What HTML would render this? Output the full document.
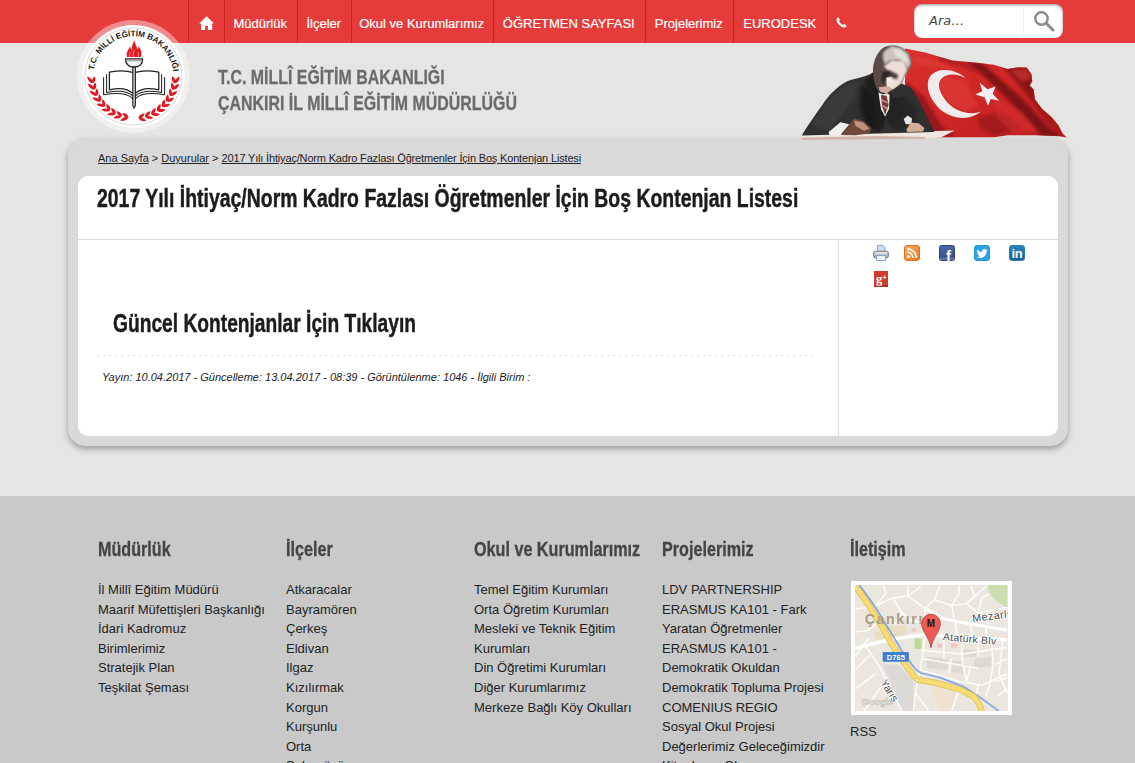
<!DOCTYPE html>
<html lang="tr">
<head>
<meta charset="utf-8">
<title>2017 Yılı İhtiyaç/Norm Kadro Fazlası Öğretmenler İçin Boş Kontenjan Listesi</title>
<style>
html,body{margin:0;padding:0;}
body{width:1135px;height:763px;overflow:hidden;background:#e5e5e4;font-family:"Liberation Sans",Arial,sans-serif;position:relative;color:#222;}
a{color:inherit;text-decoration:none;}
.cond{display:inline-block;transform-origin:0 50%;white-space:nowrap;font-weight:bold;}
#topbar{position:absolute;left:0;top:0;width:1135px;height:43px;background:#e53b3a;}
#nav{position:absolute;left:188px;top:0;height:43px;}
#nav a{position:absolute;top:0;height:43px;line-height:47px;color:#fff;font-size:13px;-webkit-text-stroke:.2px #fff;white-space:nowrap;border-left:1px solid #c42424;box-sizing:border-box;text-align:center;padding-right:1.5px;}
#search{position:absolute;left:914px;top:4px;width:149px;height:34px;background:#fff;border-radius:8px;box-shadow:inset 0 1px 3px rgba(0,0,0,.45);}
#search span{position:absolute;left:15px;top:8.5px;font-family:"DejaVu Sans","Liberation Sans",sans-serif;font-style:italic;font-size:13px;color:#444;}
#search i{position:absolute;left:109px;top:5px;height:25px;border-left:1px dotted #ddd;}
#sitename{position:absolute;left:218px;top:63.5px;color:#6b6b6b;-webkit-text-stroke:.3px #6b6b6b;font-size:20px;line-height:26px;}
#wrap{position:absolute;left:68px;top:138px;width:1000px;height:308px;background:#d9d9d9;border-radius:18px;box-shadow:0 3px 6px rgba(0,0,0,.33);}
#crumb{position:absolute;left:30px;top:14px;font-size:11px;color:#222;white-space:nowrap;}
#crumb a{text-decoration:underline;}
#card{position:absolute;left:10px;top:38px;width:980px;height:260px;background:#fff;border-radius:10px;}
#title{position:absolute;left:19px;top:6px;font-size:25px;color:#1c1c1c;-webkit-text-stroke:.45px #1c1c1c;line-height:32px;}
#hline{position:absolute;left:0;top:63px;width:980px;border-top:1px solid #dcdcdc;}
#vline{position:absolute;left:760px;top:64px;height:196px;border-left:1px solid #dcdcdc;}
#sub{position:absolute;left:35px;top:131px;font-size:25px;color:#1c1c1c;-webkit-text-stroke:.45px #1c1c1c;line-height:32px;}
#social svg{position:absolute;}
#dots{position:absolute;left:20px;top:179px;width:718px;height:1px;background:repeating-linear-gradient(90deg,#c4c4c4 0 1px,transparent 1px 6px);}
#meta{position:absolute;left:24px;top:195px;font-size:11px;font-style:italic;color:#222;white-space:nowrap;}
#footer{position:absolute;left:0;top:496px;width:1135px;height:267px;background:#c9c9c9;}
.col{position:absolute;top:0;width:180px;}
.col h3{position:absolute;left:0;top:40px;margin:0;font-size:20px;color:#444;-webkit-text-stroke:.3px #444;line-height:26px;}
.col ul{position:absolute;left:0;top:84px;margin:0;padding:0;list-style:none;font-size:13px;line-height:19.6px;color:#222;width:172px;}
#map{position:absolute;left:1px;top:85px;width:153px;height:126px;border:4px solid #fff;background:#ebe6dc;overflow:hidden;}
</style>
</head>
<body>
<div id="topbar">
  <div id="nav">
    <a style="left:0;width:36px;"><svg width="16" height="14" viewBox="0 0 16 14" style="position:absolute;left:9.6px;top:16px"><path d="M7.6 0.2L0.2 7.6L2 7.6L2 13.9L6.1 13.9L6.1 9.7L8.9 9.7L8.9 13.9L13.2 13.9L13.2 7.6L15 7.6Z" fill="#fff"/></svg></a>
    <a style="left:36px;width:73px;">Müdürlük</a>
    <a style="left:109px;width:54px;">İlçeler</a>
    <a style="left:163px;width:142px;">Okul ve Kurumlarımız</a>
    <a style="left:305px;width:152px;">ÖĞRETMEN SAYFASI</a>
    <a style="left:457px;width:88px;">Projelerimiz</a>
    <a style="left:545px;width:94px;">EURODESK</a>
    <a style="left:639px;width:30px;"><svg width="11" height="11" viewBox="0 0 11 11" style="position:absolute;left:8.2px;top:17.4px"><path d="M2.2 0.3 C1.2 0.8 0.2 1.6 0.4 2.8 C1 6.6 4.4 10 8.2 10.6 C9.4 10.8 10.2 9.8 10.7 8.8 L8.2 7 L7 8 C5.4 7.4 3.6 5.6 3 4 L4 2.8 Z" fill="#fff"/></svg></a>
  </div>
  <div id="search"><span>Ara…</span><i></i>
    <svg width="24" height="24" viewBox="0 0 24 24" style="position:absolute;left:118px;top:5px"><circle cx="9.5" cy="9.5" r="6.2" fill="none" stroke="#8a8a8a" stroke-width="2.4"/><path d="M14.2 14.2 L21 21" stroke="#8a8a8a" stroke-width="3" stroke-linecap="round"/></svg>
  </div>
</div>

<!--LOGO--><svg id="logo" style="position:absolute;left:74px;top:16px" width="120" height="120" viewBox="0 0 120 120">
<circle cx="59.4" cy="60.4" r="56.5" fill="#fff" fill-opacity=".42"/>
<circle cx="59.4" cy="60.4" r="51.4" fill="#fff"/>
<circle cx="59.4" cy="60.4" r="48.6" fill="none" stroke="#c8c8c8" stroke-width=".7"/>
<path id="lgarc" d="M19.69 54.11 A40.2 40.2 0 0 1 99.30 55.50" fill="none"/>
<text font-family="Liberation Sans,Arial,sans-serif" font-size="8.1" font-weight="bold" fill="#1a1a1a" textLength="115.1" lengthAdjust="spacingAndGlyphs"><textPath href="#lgarc" textLength="115.1" lengthAdjust="spacingAndGlyphs">T.C. MİLLİ EĞİTİM BAKANLIĞI</textPath></text>
<path fill="#e01a22" d="M54.33 101.69C51.38 100.01 47.96 101.89 46.30 104.77C49.27 105.32 53.01 104.26 54.33 101.69ZM54.33 101.69C54.32 98.48 51.29 97.00 48.27 97.45C49.18 100.01 51.71 102.21 54.33 101.69ZM47.80 100.35C45.16 98.22 41.48 99.53 39.38 102.11C42.23 103.12 46.09 102.68 47.80 100.35ZM47.80 100.35C48.31 97.18 45.55 95.23 42.50 95.19C42.99 97.87 45.13 100.44 47.80 100.35ZM41.57 97.99C39.30 95.46 35.46 96.16 32.98 98.38C35.63 99.84 39.51 100.01 41.57 97.99ZM41.57 97.99C42.58 94.94 40.17 92.58 37.16 92.05C37.22 94.77 38.92 97.65 41.57 97.99ZM35.80 94.66C33.96 91.80 30.06 91.88 27.26 93.68C29.64 95.53 33.44 96.32 35.80 94.66ZM35.80 94.66C37.28 91.81 35.28 89.09 32.39 88.09C32.02 90.79 33.24 93.90 35.80 94.66ZM30.63 90.45C29.28 87.34 25.41 86.80 22.36 88.12C24.41 90.33 28.04 91.72 30.63 90.45ZM30.63 90.45C32.55 87.87 31.01 84.87 28.32 83.42C27.52 86.02 28.23 89.30 30.63 90.45ZM26.20 85.47C25.36 82.18 21.63 81.03 18.41 81.85C20.08 84.36 23.44 86.31 26.20 85.47ZM26.20 85.47C28.50 83.23 27.46 80.03 25.04 78.16C23.83 80.60 24.01 83.95 26.20 85.47ZM22.63 79.85C22.32 76.47 18.82 74.73 15.51 75.03C16.76 77.78 19.77 80.24 22.63 79.85ZM22.63 79.85C25.26 78.01 24.74 74.67 22.64 72.45C21.06 74.67 20.71 78.00 22.63 79.85ZM19.99 73.73C20.23 70.34 17.05 68.07 13.74 67.83C14.53 70.75 17.11 73.65 19.99 73.73ZM19.99 73.73C22.88 72.33 22.90 68.96 21.19 66.43C19.28 68.36 18.39 71.59 19.99 73.73ZM18.37 67.27C19.14 63.96 16.37 61.21 13.14 60.44C13.46 63.45 15.53 66.73 18.37 67.27ZM18.37 67.27C21.45 66.34 22.01 63.02 20.72 60.25C18.52 61.85 17.13 64.90 18.37 67.27ZM64.47 101.69C65.54 104.91 69.34 105.81 72.50 104.77C70.65 102.38 67.17 100.66 64.47 101.69ZM64.47 101.69C67.49 102.78 69.92 100.44 70.53 97.45C67.81 97.43 64.88 99.05 64.47 101.69ZM71.00 100.35C72.56 103.36 76.46 103.64 79.42 102.11C77.21 100.04 73.50 98.91 71.00 100.35ZM71.00 100.35C74.15 100.94 76.18 98.25 76.30 95.19C73.61 95.61 70.98 97.68 71.00 100.35ZM77.23 97.99C79.25 100.71 83.14 100.36 85.82 98.38C83.31 96.69 79.46 96.16 77.23 97.99ZM77.23 97.99C80.44 98.07 82.00 95.08 81.64 92.05C79.05 92.89 76.79 95.35 77.23 97.99ZM83.00 94.66C85.44 97.02 89.22 96.06 91.54 93.68C88.80 92.41 84.92 92.50 83.00 94.66ZM83.00 94.66C86.18 94.23 87.25 91.03 86.41 88.09C83.99 89.33 82.14 92.13 83.00 94.66ZM88.17 90.45C90.95 92.39 94.53 90.84 96.44 88.12C93.53 87.30 89.71 88.01 88.17 90.45ZM88.17 90.45C91.24 89.52 91.78 86.19 90.48 83.42C88.29 85.04 86.92 88.09 88.17 90.45ZM92.60 85.47C95.65 86.95 98.94 84.84 100.39 81.85C97.39 81.51 93.73 82.82 92.60 85.47ZM92.60 85.47C95.48 84.06 95.49 80.69 93.76 78.16C91.86 80.11 90.99 83.34 92.60 85.47ZM96.17 79.85C99.43 80.82 102.33 78.21 103.29 75.03C100.27 75.17 96.87 77.05 96.17 79.85ZM96.17 79.85C98.79 77.99 98.26 74.67 96.16 72.45C94.59 74.67 94.24 78.00 96.17 79.85ZM98.81 73.73C102.17 74.16 104.63 71.13 105.06 67.83C102.11 68.45 99.05 70.85 98.81 73.73ZM98.81 73.73C101.10 71.48 100.04 68.28 97.61 66.43C96.41 68.87 96.61 72.21 98.81 73.73ZM100.43 67.27C103.82 67.16 105.76 63.77 105.66 60.44C102.84 61.53 100.21 64.39 100.43 67.27ZM100.43 67.27C102.33 64.68 100.78 61.69 98.08 60.25C97.29 62.85 98.02 66.12 100.43 67.27Z"/>

<g fill="none" stroke="#222" stroke-linecap="round" stroke-linejoin="round">
<path stroke-width="1.25" d="M58.6 56.4C52 54.2 44 54.4 35.4 56.2L35.4 73.8C42 72.2 52.6 71.4 58.8 77.4M61.6 56.4C68.2 54.2 76.2 54.4 84.8 56.2L84.8 73.8C78.2 72.2 67.6 71.4 61.4 77.4"/>
<path stroke-width="1.05" d="M32.6 58.6L32.6 76.4C42 74.6 52.6 74 58.8 80M87.6 58.6L87.6 76.4C78.2 74.6 67.6 74 61.4 80"/>
<path stroke-width="1.05" d="M29.6 61.4L29.6 78.8C41 76.8 52.6 76.4 58.8 82.6M90.6 61.4L90.6 78.8C79.2 76.8 67.6 76.4 61.4 82.6"/>
</g>
<path d="M58.8 50.5L61.4 50.5L61.4 89.5L60.1 92L58.8 89.5Z" fill="#c8c8c8" stroke="#222" stroke-width="1.1"/>
<path d="M51.6 42.8L68.6 42.8C68.8 48.2 65.2 51 60.1 51C55 51 51.4 48.2 51.6 42.8Z" fill="#f4f4f4" stroke="#222" stroke-width="1.3" stroke-linejoin="round"/>
<path d="M53.1 41C51.6 36.6 54.6 34 55.9 30.6C57 32.2 56.8 33.6 57.5 34.8C57.6 30.6 58.6 27.6 60.6 24.2C60.6 28.2 63.4 30 63.3 33.8C64.3 32.8 64.5 31.4 64.3 30C67.4 33.4 68.2 37.4 66.8 41Z" fill="#e01a22"/>
<path d="M59.4 41C58.2 38 59.8 36.2 60.4 33.8M55.8 41C55.2 39 55.6 37.8 56.6 36.4M64.2 41C64.8 39.2 64.6 37.6 64 36" fill="none" stroke="#fff" stroke-width=".55" stroke-opacity=".9"/>
<path d="M52.4 44.6H67.8" stroke="#aaa" stroke-width="1.4"/>

</svg><!--/LOGO-->
<div id="sitename"><span class="cond" style="transform:scaleX(.797)">T.C. MİLLÎ EĞİTİM BAKANLIĞI<br>ÇANKIRI İL MİLLÎ EĞİTİM MÜDÜRLÜĞÜ</span></div>

<!--ATA--><svg id="ata" style="position:absolute;left:795px;top:40px;z-index:3" width="280" height="106" viewBox="795 40 280 106">
<defs><filter id="b1" x="-20%" y="-20%" width="140%" height="140%"><feGaussianBlur stdDeviation="1.2"/></filter><filter id="b2" x="-20%" y="-20%" width="140%" height="140%"><feGaussianBlur stdDeviation="0.5"/></filter><filter id="b4" x="-20%" y="-20%" width="140%" height="140%"><feGaussianBlur stdDeviation="0.8"/></filter><filter id="b3" x="-30%" y="-30%" width="160%" height="160%"><feGaussianBlur stdDeviation="1.8"/></filter>
<linearGradient id="flg" x1="0" y1="0" x2="1" y2="1"><stop offset="0" stop-color="#d8302c"/><stop offset=".5" stop-color="#cf2626"/><stop offset="1" stop-color="#b81c1e"/></linearGradient>
<clipPath id="fc"><path d="M905.0 48.5L925.0 52.4L952.5 60.6L977.3 62.7L993.8 64.8L1007.6 68.9L1018.6 67.2L1026.8 67.5L1031.6 74.4L1032.3 81.3L1029.6 85.4L1033.7 89.5L1035.0 99.2L1042.0 108.8L1051.6 117.0L1058.5 125.3L1062.6 133.6L1066.7 137.4L1059.9 136.3L1035.0 135.2L1007.6 135.2L993.8 137.2L955.3 137.2L925.0 137.2L905.0 100.0Z"/></clipPath></defs>
<path d="M905.0 48.5L925.0 52.4L952.5 60.6L977.3 62.7L993.8 64.8L1007.6 68.9L1018.6 67.2L1026.8 67.5L1031.6 74.4L1032.3 81.3L1029.6 85.4L1033.7 89.5L1035.0 99.2L1042.0 108.8L1051.6 117.0L1058.5 125.3L1062.6 133.6L1066.7 137.4L1059.9 136.3L1035.0 135.2L1007.6 135.2L993.8 137.2L955.3 137.2L925.0 137.2L905.0 100.0Z" fill="url(#flg)"/>
<g clip-path="url(#fc)">
<path d="M966.3 60.6L982.8 63.4L1021.3 97.8L1048.8 128.1L1062.6 136.3L1042.0 136.3L1013.1 104.7L989.7 81.3Z" fill="#6d0e12" fill-opacity="0.8" filter="url(#b3)"/>
<path d="M1002.1 66.1L1029.6 67.5L1033.7 85.4L1035.1 99.2L1048.8 117.1L1064.0 134.9L1048.8 122.6L1029.6 97.8L1013.1 78.5Z" fill="#7a1216" fill-opacity="0.75" filter="url(#b3)"/>
<path d="M905.7 81.3L925.0 97.8L941.5 125.3L955.3 137.0L905.7 137.0Z" fill="#8a1418" fill-opacity="0.75" filter="url(#b3)"/>
<path d="M977.3 117.1L1002.1 111.6L1021.3 128.1L996.6 136.3L980.0 128.1Z" fill="#8e1519" fill-opacity="0.6" filter="url(#b3)"/>
<path d="M941.5 56.5L966.3 62.7L993.8 75.8L982.8 74.4L959.4 66.1L938.8 60.6Z" fill="#8a1418" fill-opacity="0.55" filter="url(#b3)"/>
<path d="M938.8 74.4L966.3 81.3L977.3 106.1L966.3 111.6L952.5 106.1L941.5 92.3Z" fill="#e2413c" fill-opacity="0.5" filter="url(#b3)"/>
<path d="M1010.3 70.3L1026.8 69.6L1031.0 78.5L1021.3 81.3Z" fill="#e2413c" fill-opacity="0.5" filter="url(#b3)"/>
<path d="M993.8 97.8L1021.3 111.6L1037.8 130.8L1013.1 133.6L996.6 117.1Z" fill="#dc3834" fill-opacity="0.45" filter="url(#b3)"/>
<path d="M911.2 56.5L933.3 59.3L959.4 71.6L933.3 67.5L916.7 64.8Z" fill="#e0403a" fill-opacity="0.5" filter="url(#b3)"/>
</g>
<path d="M966.3 78.5C956.6 69.6 938.8 66.1 930.5 75.8C923.6 85.4 930.5 101.9 942.9 111.6C955.3 120.5 971.8 119.8 980.7 111.6C970.4 115.7 955.3 111.6 947.0 101.9C937.4 90.9 936.0 79.9 945.6 75.8C952.5 73.0 960.8 75.1 966.3 78.5Z" fill="#f1ebec" filter="url(#b2)"/>
<path d="M979.8 82.7L987.6 89.3L995.5 86.5L992.7 94.0L999.3 100.8L990.8 99.0L988.0 105.8L984.5 97.3L975.2 94.4L982.4 91.3Z" fill="#f4eff0" filter="url(#b2)"/>
<path d="M801.9 134.6L954.6 130.6L941.0 137.6L925.0 138.6L801.9 139.8Z" fill="#efe6e0"/>
<path d="M801.9 137.6L880.0 136.0L925.0 137.0L925.0 138.8L801.9 140.0Z" fill="#b98a78" fill-opacity=".55" filter="url(#b2)"/>
<path d="M801.9 135.2C806.0 128.1 815.6 114.3 822.5 104.7C828.0 96.4 836.3 86.8 847.3 81.3C854.2 78.5 866.6 77.2 873.4 72.3L877.6 85.4L891.3 95.0L901.0 83.3C905.1 85.4 910.6 87.5 913.3 90.9C918.8 99.2 927.1 117.1 934.0 130.1L934.0 131.9L801.9 135.5Z" fill="#303030"/>
<path d="M811.5 125.3L826.6 101.9L844.5 85.4L859.7 81.3L854.2 97.8L840.4 117.1L829.4 130.8Z" fill="#484848" fill-opacity=".45" filter="url(#b3)"/>
<path d="M861.1 85.4L877.6 89.5L883.1 117.1L880.3 132.2L866.6 128.1L859.7 106.1Z" fill="#161616" fill-opacity=".7" filter="url(#b3)"/>
<path d="M891.3 111.6L905.1 97.8L916.1 108.8L918.8 128.1L894.1 130.8Z" fill="#1c1c1c" fill-opacity=".6" filter="url(#b3)"/>
<path d="M876.2 91.6L883.1 94.4L889.9 92.3L889.3 108.8L885.1 117.1L881.0 109.5Z" fill="#efe9e6"/>
<path d="M881.0 95.0L886.5 95.7L888.6 104.7L885.1 115.0L882.0 106.1Z" fill="#7b3a3a"/>
<path d="M881.4 99.2L887.5 101.9L887.7 103.6L881.7 100.8Z" fill="#d9b9b0" fill-opacity=".8"/>
<path d="M882.2 104.7L887.5 107.7L886.9 109.4L882.8 106.6Z" fill="#d9b9b0" fill-opacity=".8"/>
<path d="M872.1 74.4L877.6 86.8L881.0 109.5L885.1 117.1L883.1 128.1L876.2 128.1L873.4 97.8L863.8 81.3Z" fill="#1e1e1e"/>
<path d="M901.0 83.3L889.9 93.0L889.3 108.8L885.1 117.1L891.3 128.1L899.6 117.1L905.1 95.0Z" fill="#242424"/>
<path d="M871.4 73.0L880.3 71.6L903.7 76.1L901.6 85.4L891.3 95.7L877.6 87.5Z" fill="#2a2422"/>
<path d="M873.4 75.4C871.8 66.0 874.9 54.9 882.0 48.7C886.8 44.7 896.2 43.9 902.5 47.9C908.8 51.8 912.7 58.9 911.5 64.4C910.4 69.9 905.6 74.6 904.1 77.8C902.5 84.1 897.0 88.8 893.0 90.7C889.9 93.5 883.6 94.3 878.9 91.1C875.7 88.0 874.2 82.5 873.4 75.4Z" fill="#5c4a48"/>
<path d="M883.6 51.8L891.5 45.7L900.9 47.7L908.4 53.8L911.1 62.8L908.2 69.3L904.1 63.6L897.8 59.7L889.9 60.6L885.0 64.4L882.8 58.1Z" fill="#cdc4be" filter="url(#b4)"/>
<path d="M893.0 48.7L900.9 50.2L907.2 57.3L908.0 63.6L902.5 59.7L895.4 55.7Z" fill="#e9e3de" fill-opacity=".9" filter="url(#b1)"/>
<path d="M884.0 66.4L891.5 60.1L904.1 61.2L907.4 69.9L904.1 77.0L901.1 84.1L893.4 90.4L887.1 87.2L886.4 77.8L890.3 73.0Z" fill="#eedfd7" filter="url(#b4)"/>
<path d="M882.4 71.9L889.9 70.5L898.2 75.0L897.0 79.3L891.5 77.6L886.0 77.8L883.6 84.1L881.2 80.9Z" fill="#241a1e" fill-opacity=".85" filter="url(#b4)"/>
<path d="M878.9 87.2L886.0 86.6L891.5 89.2L886.4 93.7L879.7 91.5Z" fill="#d9aaa2" filter="url(#b2)"/>
<path d="M886.4 77.8L891.5 77.0L893.0 84.1L887.1 87.2Z" fill="#f4e6de" filter="url(#b2)"/>
<path d="M891.1 91.1L900.9 83.9L910.4 87.2L915.1 95.1L893.0 98.2Z" fill="#303030"/>
<path d="M828.7 131.9L840.4 122.3L849.4 124.2L840.4 134.9L829.4 135.2Z" fill="#f1eeee"/>
<path d="M849.4 124.2L854.2 118.4L863.8 121.2L871.4 128.1L869.3 133.6L855.5 135.2L841.8 134.9Z" fill="#6f4a3c"/>
<path d="M854.2 120.5L863.1 122.6L869.3 128.8L863.8 130.8L855.5 126.0Z" fill="#c79a86" fill-opacity=".9" filter="url(#b2)"/>
<path d="M903.7 119.1L907.8 115.4L912.0 118.4L911.3 123.9L905.8 124.2Z" fill="#e9e6e6" filter="url(#b2)"/>
<path d="M906.5 129.4L910.6 122.6L918.8 123.3L924.4 128.1L923.0 131.5L907.2 131.9Z" fill="#d3ac98" filter="url(#b2)"/>
</svg><!--/ATA-->
<div id="wrap">
  <div id="crumb"><a>Ana Sayfa</a> &gt; <a>Duyurular</a> &gt; <a style="letter-spacing:-.17px">2017 Yılı İhtiyaç/Norm Kadro Fazlası Öğretmenler İçin Boş Kontenjan Listesi</a></div>
  <div id="card">
    <div id="title"><span class="cond" style="transform:scaleX(.777)">2017 Yılı İhtiyaç/Norm Kadro Fazlası Öğretmenler İçin Boş Kontenjan Listesi</span></div>
    <div id="hline"></div><div id="vline"></div>
    <div id="sub"><span class="cond" style="transform:scaleX(.768)">Güncel Kontenjanlar İçin Tıklayın</span></div>
    <div id="social">
<svg style="left:795px;top:69px" width="16" height="16" viewBox="0 0 16 16"><defs><linearGradient id="pg" x1="0" y1="0" x2="0" y2="1"><stop offset="0" stop-color="#e6e6e6"/><stop offset="1" stop-color="#9c9c9c"/></linearGradient></defs><path d="M4.5 .5H10L12 2.5V7H4.5Z" fill="#c9dcf5" stroke="#7c9fd3" stroke-width=".9"/><rect x=".6" y="6.2" width="14.8" height="6.6" rx="1.8" fill="url(#pg)" stroke="#6f6f6f" stroke-width=".9"/><rect x="3.4" y="10.6" width="9.2" height="4.8" fill="#eef3fb" stroke="#7c9fd3" stroke-width=".9"/><path d="M2.2 8.2H13.8" stroke="#fff" stroke-width=".8" opacity=".8"/></svg>
<svg style="left:826px;top:69px" width="16" height="16" viewBox="0 0 16 16"><defs><linearGradient id="rg" x1="0" y1="0" x2="1" y2="1"><stop offset="0" stop-color="#fbb066"/><stop offset="1" stop-color="#e6741a"/></linearGradient></defs><rect x=".5" y=".5" width="15" height="15" rx="2.4" fill="url(#rg)" stroke="#d9711f"/><circle cx="4.6" cy="11.6" r="1.5" fill="#fff"/><path d="M3.2 7.2A5.8 5.8 0 0 1 9 13M3.2 3.8A9.2 9.2 0 0 1 12.4 13" fill="none" stroke="#fff" stroke-width="1.7"/></svg>
<svg style="left:861px;top:69px" width="16" height="16" viewBox="0 0 16 16"><defs><linearGradient id="fg" x1="0" y1="0" x2="0" y2="1"><stop offset="0" stop-color="#4c69a8"/><stop offset="1" stop-color="#2f4a87"/></linearGradient></defs><rect x=".5" y=".5" width="15" height="15" rx="2" fill="url(#fg)" stroke="#2c4378"/><rect x="1" y="12.6" width="14" height="2.4" fill="#6d84b9" opacity=".7"/><text x="9.4" y="15.6" font-family="Liberation Sans,Arial,sans-serif" font-weight="bold" font-size="15" fill="#fff" text-anchor="middle">f</text></svg>
<svg style="left:896px;top:69px" width="16" height="16" viewBox="0 0 16 16"><rect x=".5" y=".5" width="15" height="15" rx="2.4" fill="#2aa5e2" stroke="#2197d2"/><g transform="translate(2.6 3) scale(.46)"><path fill="#fff" d="M23.954 4.569c-.885.389-1.83.654-2.825.775 1.014-.611 1.794-1.574 2.163-2.723-.951.555-2.005.959-3.127 1.184-.896-.959-2.173-1.559-3.591-1.559-2.717 0-4.92 2.203-4.92 4.917 0 .39.045.765.127 1.124C7.691 8.094 4.066 6.13 1.64 3.161c-.427.722-.666 1.561-.666 2.475 0 1.71.87 3.213 2.188 4.096-.807-.026-1.566-.248-2.228-.616v.061c0 2.385 1.693 4.374 3.946 4.827-.413.111-.849.171-1.296.171-.314 0-.615-.03-.916-.086.631 1.953 2.445 3.377 4.604 3.417-1.68 1.319-3.809 2.105-6.102 2.105-.39 0-.779-.023-1.17-.067 2.189 1.394 4.768 2.209 7.557 2.209 9.054 0 13.999-7.496 13.999-13.986 0-.209 0-.42-.015-.63.961-.689 1.8-1.56 2.46-2.548z"/></g></svg>
<svg style="left:931px;top:69px" width="16" height="16" viewBox="0 0 16 16"><defs><linearGradient id="lg" x1="0" y1="0" x2="0" y2="1"><stop offset="0" stop-color="#2a86bd"/><stop offset="1" stop-color="#155f8f"/></linearGradient></defs><rect x=".5" y=".5" width="15" height="15" rx="2.4" fill="url(#lg)" stroke="#2b7fb0"/><text x="8" y="12.6" font-family="Liberation Sans,Arial,sans-serif" font-weight="bold" font-size="13" fill="#fff" text-anchor="middle" letter-spacing="-.3">in</text></svg>
<svg style="left:796px;top:95px" width="14" height="16" viewBox="0 0 14 16"><rect width="14" height="16" fill="#d23b2c"/><rect y="14" width="14" height="2" fill="#b53024"/><text x="5.2" y="11.6" font-family="Liberation Serif,serif" font-weight="bold" font-size="12.5" fill="#fff" text-anchor="middle">g</text><text x="10.6" y="9" font-family="Liberation Sans,Arial,sans-serif" font-weight="bold" font-size="6.5" fill="#fff" text-anchor="middle">+</text></svg>
</div>
    <div id="dots"></div>
    <div id="meta">Yayın: 10.04.2017 - Güncelleme: 13.04.2017 - 08:39 - Görüntülenme: 1046 - İlgili Birim :</div>
  </div>
</div>

<div id="footer">
  <div class="col" style="left:98px"><h3><span class="cond" style="transform:scaleX(.808)">Müdürlük</span></h3>
    <ul><li>İl Millî Eğitim Müdürü</li><li>Maarif Müfettişleri Başkanlığı</li><li>İdari Kadromuz</li><li>Birimlerimiz</li><li>Stratejik Plan</li><li>Teşkilat Şeması</li></ul></div>
  <div class="col" style="left:286px"><h3><span class="cond" style="transform:scaleX(.808)">İlçeler</span></h3>
    <ul><li>Atkaracalar</li><li>Bayramören</li><li>Çerkeş</li><li>Eldivan</li><li>Ilgaz</li><li>Kızılırmak</li><li>Korgun</li><li>Kurşunlu</li><li>Orta</li><li>Şabanözü</li><li>Yapraklı</li></ul></div>
  <div class="col" style="left:474px"><h3><span class="cond" style="transform:scaleX(.808)">Okul ve Kurumlarımız</span></h3>
    <ul><li>Temel Eğitim Kurumları</li><li>Orta Öğretim Kurumları</li><li>Mesleki ve Teknik Eğitim Kurumları</li><li>Din Öğretimi Kurumları</li><li>Diğer Kurumlarımız</li><li>Merkeze Bağlı Köy Okulları</li></ul></div>
  <div class="col" style="left:662px"><h3><span class="cond" style="transform:scaleX(.808)">Projelerimiz</span></h3>
    <ul><li>LDV PARTNERSHIP</li><li>ERASMUS KA101 - Fark Yaratan Öğretmenler</li><li>ERASMUS KA101 - Demokratik Okuldan Demokratik Topluma Projesi</li><li>COMENIUS REGIO</li><li>Sosyal Okul Projesi</li><li>Değerlerimiz Geleceğimizdir</li><li>Kitaplarım Olsun</li></ul></div>
  <div class="col" style="left:850px"><h3><span class="cond" style="transform:scaleX(.808)">İletişim</span></h3>
    <div id="map"><!--MAP--><svg width="153" height="126" viewBox="0 0 153 126" style="display:block">
<rect width="153" height="126" fill="#ebe7de"/>
<path d="M71.8 71.8L92.7 73.7L92.7 85.1L71.8 83.2Z" fill="#dedad2"/>
<path d="M96.5 75.6L107.9 76.6L107.9 88.9L96.5 87.0Z" fill="#dedad2"/>
<path d="M119.3 73.7L136.4 70.9L136.4 81.3L119.3 83.2Z" fill="#dedad2"/>
<path d="M107.9 64.2L123.1 65.2L123.1 71.8L107.9 71.8Z" fill="#dedad2"/>
<path d="M31.0 41.4L50.9 40.5L52.8 50.9L35.7 52.8Z" fill="#e9dfc0"/>
<path d="M18.6 47.1L31.9 45.2L37.6 54.7L22.4 58.5Z" fill="#e9dfc0"/>
<path d="M75.6 102.2L100.3 106.0L98.4 126.2L85.1 126.2Z" fill="#efe2cf"/>
<path d="M28.1 79.4L43.3 79.4L58.5 96.5L58.5 126.2L47.1 126.2Z" fill="#dcdad6"/>
<path d="M132.6 0.0L152.2 0.0L152.2 23.4L142.1 16.7L134.5 9.1Z" fill="#cbdfae"/>
<path d="M59.5 53.8L66.5 53.8L66.5 63.8L59.5 63.8Z" fill="#bcd99a"/>
<path d="M82.3 58.5L87.0 58.5L87.0 62.7L82.3 62.7Z" fill="#f2c4c4"/>
<path d="M95.6 58.5L102.2 58.5L102.2 62.7L95.6 62.7Z" fill="#f2c4c4"/>
<path d="M56.6 43.3L61.4 43.3L61.4 46.7L56.6 46.7Z" fill="#f2c4c4"/>
<path d="M0.0 24.3L18.6 21.5L37.6 12.9L52.8 11.0L69.9 23.4L88.9 33.8L107.9 37.6L152.2 45.2M28.1 0.0L31.0 8.2L20.5 20.5M52.8 0.0L52.8 11.0M85.1 0.0L79.4 14.8L69.9 23.4M79.4 14.8L96.5 20.5L111.7 18.6L132.6 0.0M96.5 20.5L100.3 37.6M111.7 18.6L123.1 28.1L134.5 39.5M123.1 28.1L152.2 22.4M0.0 47.1L12.9 45.2L22.4 37.6M0.0 71.8L9.1 58.5L14.8 52.8M9.1 58.5L24.3 81.3L39.5 111.7L47.1 126.2M0.0 85.1L14.8 69.9M0.0 104.1L20.5 88.9M9.1 126.2L24.3 104.1L31.9 96.5M69.9 52.8L66.1 79.4L63.3 95.0L60.4 107.9L58.5 126.2M60.4 107.9L73.7 126.2M66.1 65.2L107.9 69.0L152.2 62.3M68.0 73.7L123.1 83.2M66.1 85.1L104.1 96.5L126.9 100.3L152.2 88.9M88.9 52.8L88.9 73.7M106.0 53.8L107.9 79.4L111.7 96.5M123.1 54.7L123.1 71.8M136.4 55.7L138.3 79.4L134.5 100.3L130.7 111.7M96.5 73.7L93.7 88.9M115.5 81.3L111.7 96.5M147.8 54.7L144.0 88.9L152.2 107.9M104.1 104.1L96.5 126.2M123.1 100.3L121.2 111.7M152.2 73.7L140.2 79.4M47.1 28.1L56.6 35.7L69.9 37.6L88.9 33.8M37.6 12.9L47.1 28.1L39.5 39.5M69.9 23.4L69.9 37.6M100.3 37.6L102.2 52.8M115.5 39.5L117.4 53.8M130.7 42.4L131.7 54.7M140.2 96.5L152.2 92.7M142.1 111.7L152.2 104.1M52.8 11.0L66.1 1.5M104.1 0.0L104.1 9.1L96.5 20.5M115.5 0.0L119.3 11.0L111.7 18.6M123.1 28.1L126.9 12.9L134.5 9.1" fill="none" stroke="#fdfdfb" stroke-width="1.5" stroke-linejoin="round"/>
<path d="M0.0 63.3L18.6 58.5L39.5 53.8L66.1 50.0L88.9 51.3L123.1 53.8L152.2 54.7" fill="none" stroke="#fff" stroke-width="3.6" stroke-linejoin="round"/>
<path d="M69.9 23.4L88.9 33.8L107.9 37.6L152.2 45.2" fill="none" stroke="#fff" stroke-width="3" stroke-linejoin="round"/>
<path d="M4.4 0.0L20.5 22.4L35.7 47.1L47.1 66.1L60.4 84.2L66.1 88.0L85.1 92.7L107.9 101.3L126.9 113.6L144.0 126.2" fill="none" stroke="#7fa9e6" stroke-width="1.8" stroke-linejoin="round"/>
<path d="M0.6 1.5L12.9 18.6L28.1 43.3L37.6 60.4L49.0 77.5L58.5 90.8L63.3 95.0L79.4 97.5L104.1 104.1L119.3 111.7L124.1 119.3L126.9 126.2" fill="none" stroke="#e3b84a" stroke-width="6.2" stroke-linejoin="round"/>
<path d="M0.6 1.5L12.9 18.6L28.1 43.3L37.6 60.4L49.0 77.5L58.5 90.8L63.3 95.0L79.4 97.5L104.1 104.1L119.3 111.7L124.1 119.3L126.9 126.2" fill="none" stroke="#f7dc74" stroke-width="4.8" stroke-linejoin="round"/>
<circle cx="61.9" cy="95.0" r="1.6" fill="#fff" stroke="#e3b84a" stroke-width=".8"/>
<text x="9.7" y="39.1" font-family="Liberation Sans,Arial,sans-serif" font-size="14" font-weight="bold" fill="#a39c88" letter-spacing="1.7">Çankırı</text>
<text x="117.8" y="36.9" font-family="Liberation Sans,Arial,sans-serif" font-size="10.6" letter-spacing=".5" fill="#4a4a4a" stroke="#fff" stroke-width="1.6" paint-order="stroke" transform="rotate(-7 117.8 36.9)">Mezarlı</text>
<text x="87.8" y="55.1" font-family="Liberation Sans,Arial,sans-serif" font-size="10.4" letter-spacing=".3" fill="#4a4a4a" stroke="#fff" stroke-width="1.6" paint-order="stroke" transform="rotate(5 87.8 55.1)">Atatürk Blv</text>
<text x="25.3" y="97.5" font-family="Liberation Sans,Arial,sans-serif" font-size="10.4" fill="#4a4a4a" stroke="#fff" stroke-width="1.6" paint-order="stroke" transform="rotate(58 25.3 97.5)">Yarış</text>
<rect x="27.7" y="67.1" width="26.2" height="9.7" rx="1" fill="#3f7fd0"/>
<text x="40.9" y="74.7" font-family="Liberation Sans,Arial,sans-serif" font-size="7.6" font-weight="bold" fill="#fff" text-anchor="middle">D765</text>
<text x="6.8" y="119.7" font-family="Liberation Sans,Arial,sans-serif" font-size="9.5" font-weight="bold" fill="#f4f4f2" stroke="#b8b6b0" stroke-width=".5" letter-spacing="-.3">Google</text>
<path d="M76.0 62.7 C75.4 54.7 66.6 45.6 66.6 38.6 A9.4 9.4 0 1 1 85.4 38.6 C85.4 45.6 76.6 54.7 76.0 62.7Z" fill="#ee5a55" stroke="#b5302c" stroke-width=".8"/>
<text x="76.0" y="42.4" font-family="Liberation Sans,Arial,sans-serif" font-size="10" font-weight="bold" fill="#2a0d0c" text-anchor="middle">M</text>
</svg><!--/MAP--></div>
    <div style="position:absolute;left:0;top:227.5px;font-size:13px;">RSS</div></div>
</div>
</body>
</html>
